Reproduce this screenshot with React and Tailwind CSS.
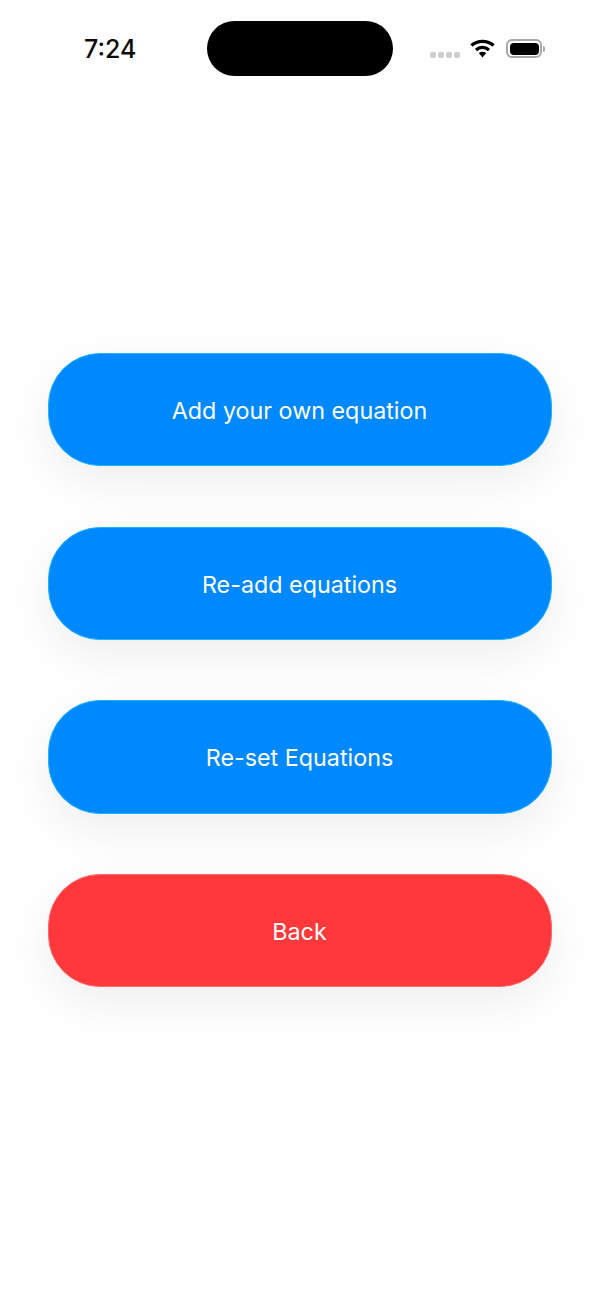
// App.jsx
const buttons = [
  { label: "Add your own equation", color: "blue" },
  { label: "Re-add equations", color: "blue" },
  { label: "Re-set Equations", color: "blue" },
  { label: "Back", color: "red" },
];

const StatusBar = () => (
  <div className="flex items-center h-[55px] pl-[84px] pr-[53px]">
    <span className="w-[123px] text-[25px] leading-none font-[550] mt-[1px] text-[#0b0b0b] font-['Inter',sans-serif]">7:24</span>
    <div className="w-[186px] h-[55px] rounded-[28px] bg-black" />
    <div className="flex items-center ml-[37px]">
      <div className="flex gap-[2px] mt-[12px]">
        <span className="w-[6px] h-[6px] rounded-[2px] bg-[#cfcfcf]" />
        <span className="w-[6px] h-[6px] rounded-[2px] bg-[#cfcfcf]" />
        <span className="w-[6px] h-[6px] rounded-[2px] bg-[#cfcfcf]" />
        <span className="w-[6px] h-[6px] rounded-[2px] bg-[#cfcfcf]" />
      </div>
      <svg className="ml-[10px]" width="25" height="19" viewBox="0 0 25 19" fill="none">
        <path d="M1.5 6.5C7.5 1 17.5 1 23.5 6.5" stroke="black" strokeWidth="3.4" />
        <path d="M6 11C9.8 7.6 15.2 7.6 19 11" stroke="black" strokeWidth="3.2" />
        <path d="M8.8 14L12.5 18.5L16.2 14C14 12.2 11 12.2 8.8 14Z" fill="black" />
      </svg>
      <div className="flex items-center ml-[11px]">
        <div className="w-[36px] h-[19px] rounded-[6px] border-2 border-[#a8a8a8] p-[1.5px]">
          <div className="w-full h-full rounded-[4px] bg-black" />
        </div>
        <div className="w-[2px] h-[6px] ml-[1px] rounded-r-full bg-[#a8a8a8]" />
      </div>
    </div>
  </div>
);

export default function App() {
  return (
    <div className="w-[600px] h-[1299px] overflow-hidden bg-white pt-[21px] font-['Inter',sans-serif]">
      <StatusBar />
      <div className="flex flex-col gap-[60.3px] px-[48px] pt-[277px]">
        {buttons.map((b) => (
          <button
            key={b.label}
            className={
              b.color === "red"
                ? "h-[113.4px] pt-[2px] pr-[1px] rounded-[52px] border border-[#ff6b70] bg-[#ff383c] text-white text-[23.3px] leading-none shadow-[0_16px_48px_rgba(0,0,0,0.07)]"
                : "h-[113.4px] pt-[2px] pr-[1px] rounded-[52px] border border-[#1fb4ff] bg-[#0088ff] text-white text-[23.3px] leading-none shadow-[0_16px_48px_rgba(0,0,0,0.07)]"
            }
          >
            {b.label}
          </button>
        ))}
      </div>
    </div>
  );
}
